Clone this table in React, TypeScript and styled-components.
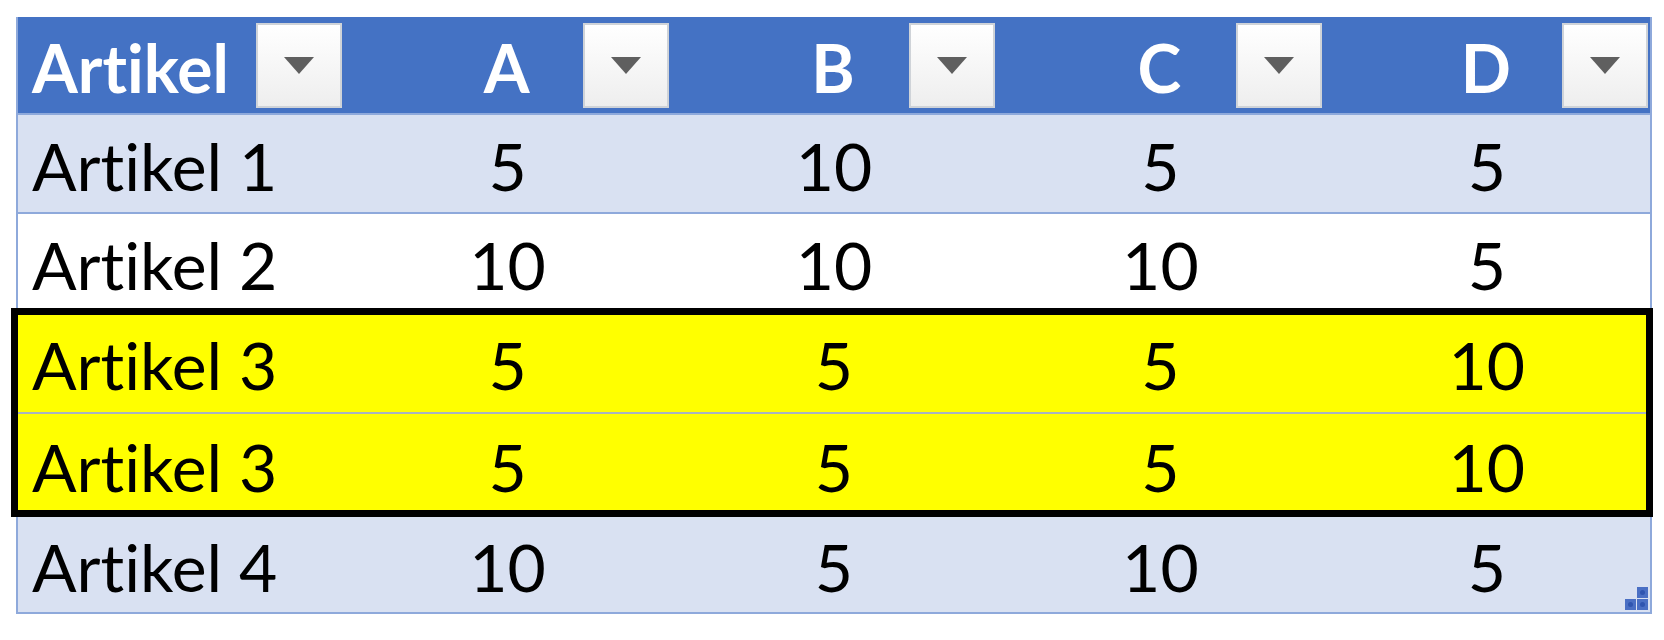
import React from "react";
import styled, { createGlobalStyle } from "styled-components";

const GlobalStyle = createGlobalStyle`
  html, body { margin: 0; padding: 0; background: #ffffff; }
  * { box-sizing: border-box; }
`;

const Page = styled.div`
  padding: 17px 12px 0 16px;
  font-family: Lato, "Liberation Sans", sans-serif;
  font-variant-ligatures: none;
  font-feature-settings: "liga" 0, "clig" 0;
`;

const Table = styled.div`
  position: relative;
  width: 1636px;
  display: flex;
  flex-direction: column;
  border-left: 2px solid #8ea9db;
  border-right: 2px solid #8ea9db;
  border-bottom: 2px solid #8ea9db;
`;

const HeaderRow = styled.div`
  display: grid;
  grid-template-columns: repeat(5, 1fr);
  height: 96px;
  background: #4472c4;
`;

const HeaderCell = styled.div<{ $left?: boolean }>`
  display: grid;
  grid-template-columns: ${(p) => (p.$left ? "1fr auto" : "1fr auto 1fr")};
  align-items: center;
  padding: 0 2px 0 ${(p) => (p.$left ? "14px" : "0")};
`;

const HeaderLabel = styled.span<{ $left?: boolean }>`
  grid-column: ${(p) => (p.$left ? "1" : "2")};
  font-size: 66px;
  font-weight: 700;
  line-height: 1;
  color: #ffffff;
  padding-top: 6px;
`;

const FilterButton = styled.div`
  justify-self: end;
  grid-column: -2;
  width: 86px;
  height: 85px;
  margin-top: 1px;
  border: 2px solid #cfd3d8;
  background: linear-gradient(#ffffff, #eeeeee);
  display: flex;
  align-items: center;
  justify-content: center;
`;

const Group = styled.div`
  position: relative;
  display: flex;
  flex-direction: column;
  &::after {
    content: "";
    position: absolute;
    top: -2px;
    bottom: -2px;
    left: -7px;
    right: -3px;
    border: 7px solid #000000;
    pointer-events: none;
  }
`;

type Variant = "band" | "plain" | "yellow";

const bg: Record<Variant, string> = {
  band: "#d9e1f2",
  plain: "#ffffff",
  yellow: "#ffff00",
};

const Row = styled.div<{ $variant: Variant; $h: number }>`
  display: grid;
  grid-template-columns: repeat(5, 1fr);
  height: ${(p) => p.$h}px;
  background: ${(p) => bg[p.$variant]};
  border-top: 2px solid ${(p) => (p.$variant === "yellow" ? "#a9b4c0" : "#8ea9db")};
`;

const Cell = styled.div<{ $left?: boolean }>`
  display: flex;
  align-items: center;
  justify-content: ${(p) => (p.$left ? "flex-start" : "center")};
  padding: 5px 0 0 ${(p) => (p.$left ? "14px" : "0")};
  font-size: 66px;
  line-height: 1;
  color: #000000;
`;

const Resize = styled.svg`
  position: absolute;
  right: 2px;
  bottom: 2px;
`;

const Caret = () => (
  <svg width="30" height="17" viewBox="0 0 30 17">
    <polygon points="0,0 30,0 15,17" fill="#5f5f5f" />
  </svg>
);

const headers = ["Artikel", "A", "B", "C", "D"];

const rows: { name: string; vals: number[]; variant: Variant; h: number }[] = [
  { name: "Artikel 1", vals: [5, 10, 5, 5], variant: "band", h: 99 },
  { name: "Artikel 2", vals: [10, 10, 10, 5], variant: "plain", h: 98 },
  { name: "Artikel 3", vals: [5, 5, 5, 10], variant: "yellow", h: 102 },
  { name: "Artikel 3", vals: [5, 5, 5, 10], variant: "yellow", h: 103 },
  { name: "Artikel 4", vals: [10, 5, 10, 5], variant: "band", h: 97 },
];

const DataRow = ({ r }: { r: (typeof rows)[number] }) => (
  <Row $variant={r.variant} $h={r.h}>
    <Cell $left>{r.name}</Cell>
    {r.vals.map((v, i) => (
      <Cell key={i}>{v}</Cell>
    ))}
  </Row>
);

export default function App() {
  return (
    <>
      <GlobalStyle />
      <Page>
        <Table>
          <HeaderRow>
            {headers.map((h, i) => (
              <HeaderCell key={h} $left={i === 0}>
                <HeaderLabel $left={i === 0}>{h}</HeaderLabel>
                <FilterButton>
                  <Caret />
                </FilterButton>
              </HeaderCell>
            ))}
          </HeaderRow>
          <DataRow r={rows[0]} />
          <DataRow r={rows[1]} />
          <Group>
            <DataRow r={rows[2]} />
            <DataRow r={rows[3]} />
          </Group>
          <DataRow r={rows[4]} />
          <Resize width="23" height="23" viewBox="0 0 23 23">
            <rect x="12" y="0" width="11" height="11" fill="#4a6fc4" />
            <rect x="0" y="12" width="11" height="11" fill="#4a6fc4" />
            <rect x="12" y="12" width="11" height="11" fill="#4a6fc4" />
            <circle cx="17.5" cy="5.5" r="2.5" fill="#2f55b0" />
            <circle cx="5.5" cy="17.5" r="2.5" fill="#2f55b0" />
            <circle cx="17.5" cy="17.5" r="2.5" fill="#2f55b0" />
          </Resize>
        </Table>
      </Page>
    </>
  );
}
